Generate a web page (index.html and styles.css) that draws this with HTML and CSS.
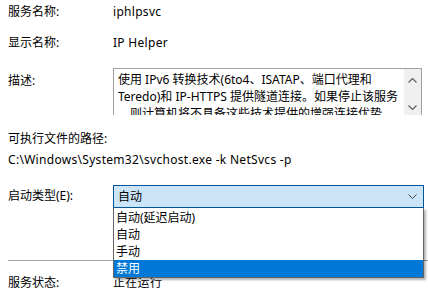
FILE: index.html
```html
<!DOCTYPE html>
<html lang="zh-CN">
<head>
<meta charset="utf-8">
<link rel="stylesheet" href="styles.css">
</head>
<body>
<div class="page">
  <div class="row r1"><span class="label">服务名称:</span><span class="value">iphlpsvc</span></div>
  <div class="row r2"><span class="label">显示名称:</span><span class="value">IP Helper</span></div>
  <div class="row desc-row">
    <span class="label desc-label">描述:</span>
    <div class="desc">
      <div class="desc-text">
        <span class="line">使用 IPv6 转换技术(6to4、ISATAP、端口代理和</span>
        <span class="line">Teredo)和 IP-HTTPS 提供隧道连接。如果停止该服务</span>
        <span class="line">，则计算机将不具备这些技术提供的增强连接优势。</span>
      </div>
      <div class="scroll">
        <svg class="arrow" width="9" height="5" viewBox="0 0 9 5"><path d="M0.5 4.5 L4.5 0.5 L8.5 4.5" fill="none" stroke="#606060" stroke-width="1.2"/></svg>
        <svg class="arrow" width="9" height="5" viewBox="0 0 9 5"><path d="M0.5 0.5 L4.5 4.5 L8.5 0.5" fill="none" stroke="#606060" stroke-width="1.2"/></svg>
      </div>
    </div>
  </div>
  <div class="exe-label">可执行文件的路径:</div>
  <div class="exe-path">C:\Windows\System32\svchost.exe -k NetSvcs -p</div>
  <div class="row start-row">
    <span class="label">启动类型(E):</span>
    <div class="combo-wrap">
      <div class="combo"><span>自动</span><svg width="9" height="5" viewBox="0 0 9 5"><path d="M0.5 0.5 L4.5 4.5 L8.5 0.5" fill="none" stroke="#404040" stroke-width="1"/></svg></div>
      <ul class="dropdown">
        <li>自动(延迟启动)</li>
        <li>自动</li>
        <li>手动</li>
        <li class="selected">禁用</li>
      </ul>
    </div>
  </div>
  <div class="sep"></div>
  <div class="row status"><span class="label">服务状态:</span><span class="value">正在运行</span></div>
</div>
</body>
</html>
```

FILE: styles.css
```css
html, body {
  margin: 0;
  padding: 0;
  background: #ffffff;
}
body {
  width: 428px;
  height: 302px;
  overflow: hidden;
  font-family: "Noto Sans", "Noto Sans CJK SC", sans-serif;
  font-size: 12px;
  line-height: 18px;
  color: #000000;
}
.page {
  padding-left: 8px;
  display: flex;
  flex-direction: column;
}
.row {
  display: flex;
  align-items: flex-start;
}
.label {
  width: 105px;
  flex: none;
}
.value { letter-spacing: 0.3px; }
.r1 { margin-top: 3px; }
.r2 { margin-top: 13px; }
.desc-row { margin-top: 16px; }
.desc-label { padding-top: 4px; }
.desc {
  width: 307px;
  height: 46px;
  border: 1px solid #a0a0a0;
  border-bottom: none;
  display: flex;
  overflow: hidden;
}
.desc-text {
  flex: 1;
  min-width: 0;
  padding: 2px 0 0 4px;
  line-height: 17px;
  overflow: hidden;
}
.line {
  display: block;
  white-space: nowrap;
}
.scroll {
  width: 17px;
  flex: none;
  background: #f0f0f0;
  display: flex;
  flex-direction: column;
  align-items: center;
  justify-content: space-between;
  padding: 9px 0 5px;
  height: 32px;
}
.arrow { display: block; }
.exe-label { margin-top: 15px; }
.exe-path { margin-top: 3px; letter-spacing: 0.3px; }
.start-row { margin-top: 16px; }
.start-row .label { padding-top: 2px; }
.combo-wrap {
  position: relative;
  width: 311px;
}
.combo {
  height: 21px;
  border: 1px solid #005499;
  background: #cce4f7;
  display: flex;
  align-items: center;
  justify-content: space-between;
  padding: 0 6px 0 4px;
}
.combo svg { display: block; }
.dropdown {
  position: absolute;
  left: 0;
  top: 23px;
  width: 309px;
  margin: 0;
  padding: 1px 0 0;
  list-style: none;
  background: #ffffff;
  border: 1px solid #646464;
  border-top: none;
  box-shadow: 2px 2px 2px rgba(0, 0, 0, 0.3);
  z-index: 2;
}
.dropdown li {
  height: 17px;
  line-height: 17px;
  padding-left: 2px;
}
.dropdown li.selected {
  background: #0078d7;
  color: #ffffff;
}
.sep {
  margin-top: 52px;
  width: 420px;
  height: 1px;
  background: #a0a0a0;
}
.status { margin-top: 13px; }
```
